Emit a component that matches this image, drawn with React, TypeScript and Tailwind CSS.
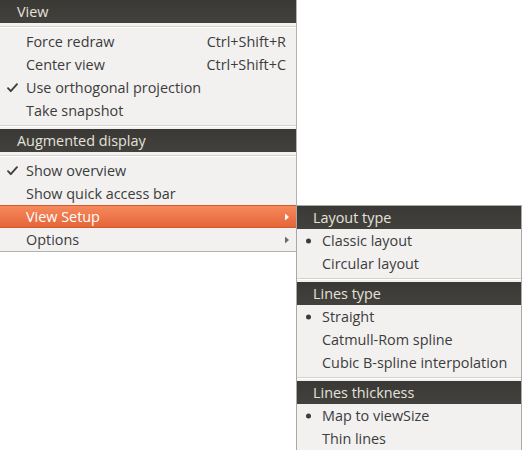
import React from "react";

const font = { fontFamily: '"Open Sans", "Noto Sans", sans-serif' };

function Check() {
  return (
    <svg width="11" height="10" viewBox="0 0 11 10" className="absolute left-[7px] top-1/2 -translate-y-1/2">
      <path d="M1 5.2 L3.8 8.2 L10 1.2" fill="none" stroke="#3c3c3c" strokeWidth="1.8" strokeLinecap="round" strokeLinejoin="round" />
    </svg>
  );
}

function Bullet() {
  return <span className="absolute left-[9px] top-1/2 -translate-y-1/2 w-[5px] h-[5px] rounded-full bg-[#3c3c3c]" />;
}

function Arrow({ color }: { color: string }) {
  return (
    <svg width="5" height="7" viewBox="0 0 5 7" className="absolute right-[6px] top-1/2 -translate-y-1/2">
      <path d="M0 0 L4 3.5 L0 7 Z" fill={color} />
    </svg>
  );
}

function Header({ label, pl }: { label: string; pl: string }) {
  return (
    <div className={`h-[23px] flex items-center bg-gradient-to-b from-[#3a3936] to-[#42413d] text-[#e6e2da] text-[14.4px] ${pl}`}>
      {label}
    </div>
  );
}

function Sep() {
  return (
    <div className="h-[7px] flex flex-col justify-center">
      <div className="h-px bg-[#d6d3ce]" />
      <div className="h-px bg-white" />
    </div>
  );
}

type ItemProps = {
  label: string;
  shortcut?: string;
  check?: boolean;
  bullet?: boolean;
  arrow?: boolean;
  active?: boolean;
  pl: string;
};

function Item({ label, shortcut, check, bullet, arrow, active, pl }: ItemProps) {
  return (
    <div
      className={`relative h-[23px] flex items-center text-[14.4px] ${pl} pr-[10px] ${
        active
          ? "bg-gradient-to-b from-[#f5895b] to-[#e5653a] text-white border-y border-[#d65a2c]"
          : "text-[#3c3c3c]"
      }`}
    >
      {check && <Check />}
      {bullet && <Bullet />}
      <span className="flex-1">{label}</span>
      {shortcut && <span>{shortcut}</span>}
      {arrow && <Arrow color={active ? "#ffffff" : "#6b6b6b"} />}
    </div>
  );
}

export default function App() {
  return (
    <div className="relative w-[522px] h-[450px] bg-white overflow-hidden" style={font}>
      <div className="absolute left-0 top-0 w-[297px] bg-[#f2f1f0] border-r border-b border-[#b5b3ae]">
        <Header label="View" pl="pl-[17px]" />
        <Sep />
        <Item label="Force redraw" shortcut="Ctrl+Shift+R" pl="pl-[26px]" />
        <Item label="Center view" shortcut="Ctrl+Shift+C" pl="pl-[26px]" />
        <Item label="Use orthogonal projection" check pl="pl-[26px]" />
        <Item label="Take snapshot" pl="pl-[26px]" />
        <Sep />
        <Header label="Augmented display" pl="pl-[17px]" />
        <Sep />
        <Item label="Show overview" check pl="pl-[26px]" />
        <Item label="Show quick access bar" pl="pl-[26px]" />
        <Item label="View Setup" arrow active pl="pl-[26px]" />
        <Item label="Options" arrow pl="pl-[26px]" />
      </div>

      <div className="absolute left-[296px] top-[205px] w-[226px] bg-[#f2f1f0] border border-[#aaa8a3]">
        <Header label="Layout type" pl="pl-[16px]" />
        <Item label="Classic layout" bullet pl="pl-[25px]" />
        <Item label="Circular layout" pl="pl-[25px]" />
        <Sep />
        <Header label="Lines type" pl="pl-[16px]" />
        <Item label="Straight" bullet pl="pl-[25px]" />
        <Item label="Catmull-Rom spline" pl="pl-[25px]" />
        <Item label="Cubic B-spline interpolation" pl="pl-[25px]" />
        <Sep />
        <Header label="Lines thickness" pl="pl-[16px]" />
        <Item label="Map to viewSize" bullet pl="pl-[25px]" />
        <Item label="Thin lines" pl="pl-[25px]" />
      </div>
    </div>
  );
}
